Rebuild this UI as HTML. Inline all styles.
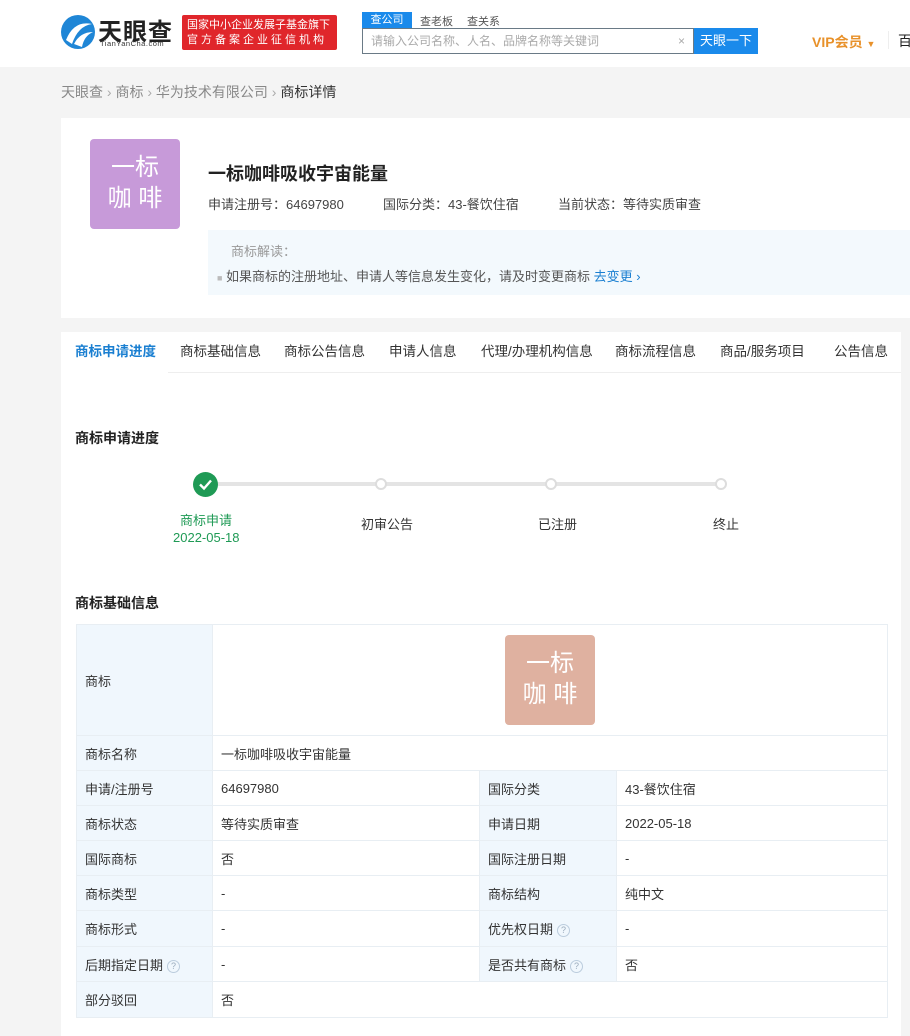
<!DOCTYPE html>
<html><head><meta charset="utf-8"><style>
*{margin:0;padding:0;box-sizing:border-box}
body{width:910px;height:1036px;overflow:hidden;background:#f4f4f4;font-family:"Liberation Sans","Noto Sans CJK SC",sans-serif;color:#333;font-size:13px;position:relative}
.abs{position:absolute}
.hdr{left:0;top:0;width:910px;height:67px;background:#fff}
.badge{left:182px;top:15px;width:155px;height:35px;background:#e0262b;color:#fff;font-size:11px;line-height:15px;padding:3px 5px;border-radius:2px;white-space:nowrap;overflow:hidden}
.tabs-s span{margin-right:14px;font-size:11px;color:#555}
.sbox{left:362px;top:28px;width:332px;height:26px;border:1px solid #6a7a86;background:#fff;color:#aaa;font-size:12px;line-height:24px;padding-left:8px}
.sbtn{left:694px;top:28px;width:64px;height:26px;background:#1a8aeb;color:#fff;font-size:13px;line-height:26px;text-align:center}
.card{left:61px;top:118px;width:849px;height:200px;background:#fff}
.logo{border-radius:4px;color:#fff;text-align:center;font-size:24px;line-height:31px;padding-top:13px}
.panel{left:61px;top:332px;width:840px;height:704px;background:#fff}
.tab{top:332px;height:40px;line-height:40px;font-size:13.5px;color:#333}
table{position:absolute;left:76px;top:624px;width:812px;border-collapse:collapse;font-size:13px}
td{border:1px solid #e8eef3;height:35px;padding:0 8px;color:#333}
td.l{background:#f0f7fd;width:136px}
td.l2{background:#f0f7fd;width:137px}
.q{display:inline-block;width:13px;height:13px;border:1px solid #bcd;border-radius:50%;font-size:9px;line-height:11px;text-align:center;color:#9ab;margin-left:4px;vertical-align:1px}
.dot{width:12px;height:12px;border:2px solid #ddd;border-radius:50%;background:#fff;top:478px}
</style></head><body>
<div class="abs hdr"></div>
<svg class="abs" style="left:60px;top:14px" width="36" height="36" viewBox="0 0 36 36"><circle cx="18" cy="18" r="17" fill="#1f86d6"/><path d="M6 26 Q14 6 32 10 Q18 12 12 30Z" fill="#fff"/><path d="M14 30 Q20 18 33 18 Q24 22 22 33Z" fill="#fff"/></svg>
<div class="abs" style="left:98px;top:12px;font-size:24px;font-weight:bold;color:#222;letter-spacing:1px">天眼查</div>
<div class="abs" style="left:100px;top:39px;font-size:7.5px;color:#333;letter-spacing:.5px">TianYanCha.com</div>
<div class="abs badge">国家中小企业发展子基金旗下<br><span style="letter-spacing:3px">官方备案企业征信机构</span></div>
<div class="abs" style="left:362px;top:12px;width:50px;height:16px;background:#1a8aeb;color:#fff;font-size:11px;text-align:center;line-height:16px">查公司</div>
<div class="abs tabs-s" style="left:420px;top:13px"><span>查老板</span><span>查关系</span></div>
<div class="abs sbox">请输入公司名称、人名、品牌名称等关键词<span style="position:absolute;right:8px;color:#aaa">×</span></div>
<div class="abs sbtn">天眼一下</div>
<div class="abs" style="left:812px;top:32px;color:#e8912a;font-weight:bold;font-size:14px">VIP会员 <span style="font-size:9px">▼</span></div>
<div class="abs" style="left:888px;top:31px;width:1px;height:18px;background:#eee"></div>
<div class="abs" style="left:898px;top:31px;font-size:14px;color:#222">百</div>
<div class="abs" style="left:61px;top:82px;font-size:14px;color:#888">天眼查 <span style="color:#aaa">›</span> 商标 <span style="color:#aaa">›</span> 华为技术有限公司 <span style="color:#aaa">›</span> <span style="color:#333">商标详情</span></div>
<div class="abs card"></div>
<div class="abs logo" style="left:90px;top:139px;width:90px;height:90px;background:#c79ad9">一标<br>咖 啡</div>
<div class="abs" style="left:208px;top:160px;font-size:18px;font-weight:bold;color:#222">一标咖啡吸收宇宙能量</div>
<div class="abs" style="left:208px;top:194px;font-size:13px;color:#444">申请注册号：64697980</div>
<div class="abs" style="left:383px;top:194px;font-size:13px;color:#444">国际分类：43-餐饮住宿</div>
<div class="abs" style="left:558px;top:194px;font-size:13px;color:#444">当前状态：等待实质审查</div>
<div class="abs" style="left:208px;top:230px;width:702px;height:65px;background:#f3f9fd"></div>
<div class="abs" style="left:231px;top:241px;font-size:13px;color:#999">商标解读：</div>
<div class="abs" style="left:217px;top:266px;font-size:13px;color:#555"><span style="color:#bbb;font-size:9px">■</span> 如果商标的注册地址、申请人等信息发生变化，请及时变更商标 <span style="color:#1a7fd1">去变更 ›</span></div>
<div class="abs panel"></div>
<div class="abs" style="left:61px;top:372px;width:840px;height:1px;background:#eee"></div>
<div class="abs" style="left:61px;top:332px;width:107px;height:41px;background:#fff;border-bottom:1px solid #fff"></div>
<div class="abs tab" style="left:75px;color:#1a7fd1;font-weight:bold">商标申请进度</div>
<div class="abs tab" style="left:180px">商标基础信息</div>
<div class="abs tab" style="left:284px">商标公告信息</div>
<div class="abs tab" style="left:389px">申请人信息</div>
<div class="abs tab" style="left:481px">代理/办理机构信息</div>
<div class="abs tab" style="left:615px">商标流程信息</div>
<div class="abs tab" style="left:720px">商品/服务项目</div>
<div class="abs tab" style="left:834px">公告信息</div>
<div class="abs" style="left:75px;top:428px;font-size:14px;font-weight:bold;color:#222">商标申请进度</div>
<div class="abs" style="left:206px;top:482px;width:516px;height:4px;background:#e4e4e4"></div>
<div class="abs" style="left:193px;top:472px;width:25px;height:25px;border-radius:50%;background:#1f9a55"></div>
<svg class="abs" style="left:193px;top:472px" width="25" height="25"><path d="M7 12.5l4 4 7-8" stroke="#fff" stroke-width="2.4" fill="none"/></svg>
<div class="abs dot" style="left:375px"></div>
<div class="abs dot" style="left:545px"></div>
<div class="abs dot" style="left:715px"></div>
<div class="abs" style="left:180px;top:510px;color:#1f9a55;font-size:13px">商标申请</div>
<div class="abs" style="left:173px;top:530px;color:#1f9a55;font-size:13px">2022-05-18</div>
<div class="abs" style="left:361px;top:514px;font-size:13px">初审公告</div>
<div class="abs" style="left:538px;top:514px;font-size:13px">已注册</div>
<div class="abs" style="left:713px;top:514px;font-size:13px">终止</div>
<div class="abs" style="left:75px;top:593px;font-size:14px;font-weight:bold;color:#222">商标基础信息</div>
<table>
<tr><td class="l" style="height:111px">商标</td><td colspan="3" style="text-align:center"><div class="logo" style="display:inline-block;width:90px;height:90px;background:#dfb1a0;vertical-align:middle;padding-top:13px">一标<br>咖 啡</div></td></tr>
<tr><td class="l">商标名称</td><td colspan="3">一标咖啡吸收宇宙能量</td></tr>
<tr><td class="l">申请/注册号</td><td style="width:267px">64697980</td><td class="l2">国际分类</td><td>43-餐饮住宿</td></tr>
<tr><td class="l">商标状态</td><td>等待实质审查</td><td class="l2">申请日期</td><td>2022-05-18</td></tr>
<tr><td class="l">国际商标</td><td>否</td><td class="l2">国际注册日期</td><td>-</td></tr>
<tr><td class="l">商标类型</td><td>-</td><td class="l2">商标结构</td><td>纯中文</td></tr>
<tr><td class="l" style="height:36px">商标形式</td><td>-</td><td class="l2">优先权日期<span class="q">?</span></td><td>-</td></tr>
<tr><td class="l">后期指定日期<span class="q">?</span></td><td>-</td><td class="l2">是否共有商标<span class="q">?</span></td><td>否</td></tr>
<tr><td class="l" style="height:36px">部分驳回</td><td colspan="3">否</td></tr>
</table>
</body></html>
